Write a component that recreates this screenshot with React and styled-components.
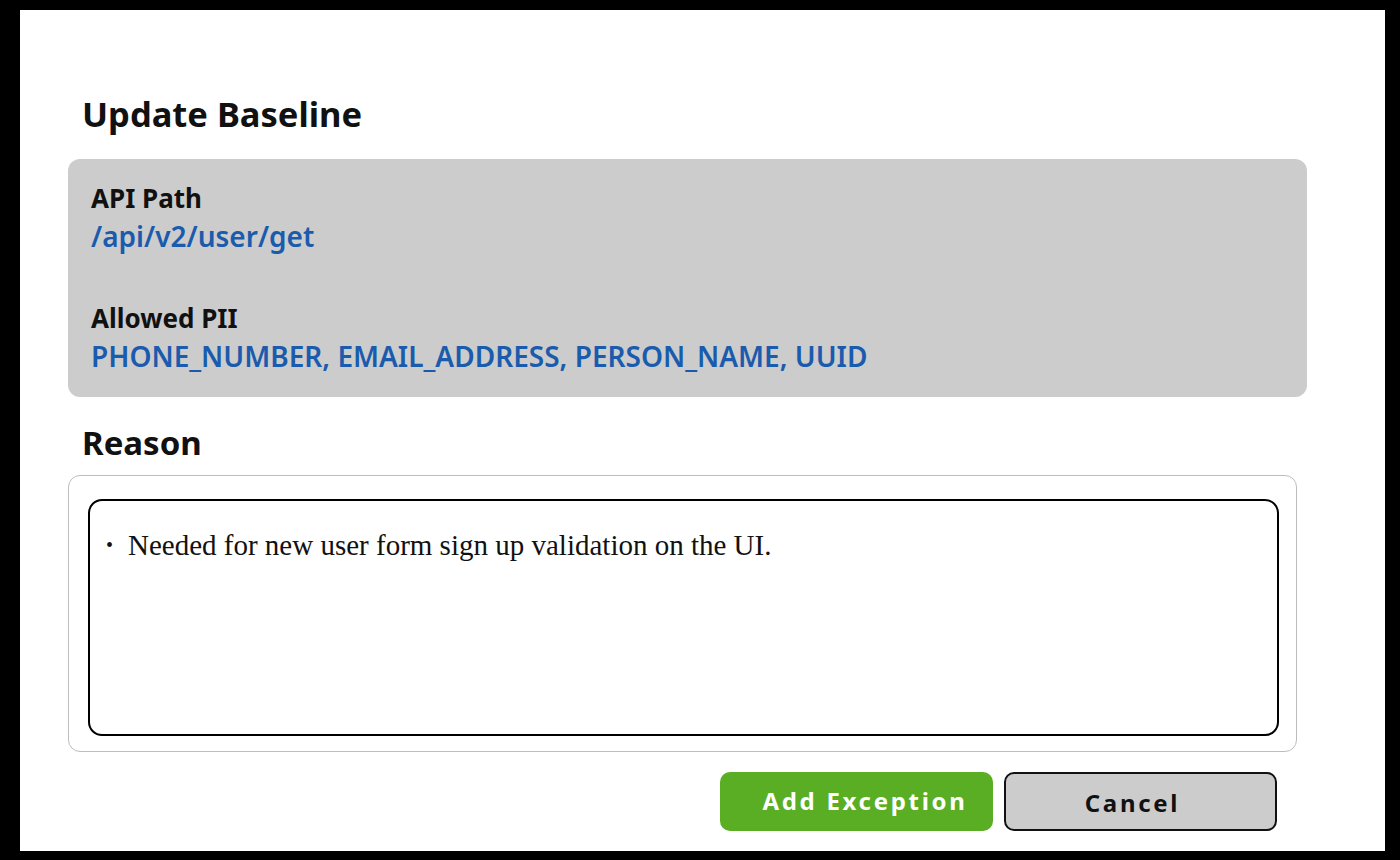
import React from "react";
import styled, { createGlobalStyle } from "styled-components";

const Global = createGlobalStyle`
  html, body { margin: 0; padding: 0; background: #000; }
  body { font-family: "Noto Sans", "Liberation Sans", sans-serif; }
  * { box-sizing: border-box; }
`;

const Panel = styled.div`
  margin: 10px 15px 9px 20px;
  height: 841px;
  background: #fff;
  padding: 83px 0 0 48px;
  display: flex;
  flex-direction: column;
`;

const Heading = styled.h1`
  margin: 0 0 0 14px;
  font-size: ${(p) => p.$size || 34.5}px;
  line-height: 42px;
  font-weight: 700;
  color: #111;
`;

const InfoBox = styled.section`
  margin-top: 24px;
  width: 1239px;
  background: #cccccc;
  border-radius: 12px;
  padding: 21px 23px;
  display: flex;
  flex-direction: column;
  gap: 44px;
`;

const Field = styled.div`
  display: flex;
  flex-direction: column;
`;

const Label = styled.div`
  font-size: 26px;
  line-height: 36px;
  font-weight: 700;
  color: #111;
`;

const Value = styled.div`
  font-size: 28px;
  line-height: 40px;
  font-weight: 600;
  color: #1a5bad;
`;

const SubHeading = styled(Heading)`
  margin-top: 25px;
`;

const EditorFrame = styled.div`
  margin-top: 11px;
  width: 1229px;
  height: 277px;
  border: 1px solid #bdbdbd;
  border-radius: 12px;
  padding: 23px 17px 15px 19px;
`;

const Editor = styled.div`
  height: 100%;
  border: 2px solid #000;
  border-radius: 14px;
  padding: 26px 16px 18px;
  font-family: "Liberation Serif", "Times New Roman", serif;
  font-size: 29px;
  line-height: 36px;
  color: #111;
`;

const Bullets = styled.ul`
  margin: 0;
  padding: 0 0 0 22px;
  list-style: none;
`;

const Bullet = styled.li`
  position: relative;
  &::before {
    content: "•";
    position: absolute;
    left: -22px;
    top: 0;
    font-size: 20px;
  }
`;

const Actions = styled.div`
  margin-top: 20px;
  width: 1209px;
  display: flex;
  justify-content: flex-end;
  gap: 11px;
`;

const Button = styled.button`
  width: 273px;
  height: 59px;
  border-radius: 10px;
  font-family: "Noto Sans", "Liberation Sans", sans-serif;
  font-size: 24px;
  font-weight: 700;
  letter-spacing: 2.7px;
  cursor: pointer;
  background: ${(p) => (p.$primary ? "#5aae24" : "#cccccc")};
  color: ${(p) => (p.$primary ? "#fff" : "#111")};
  border: ${(p) => (p.$primary ? "none" : "2px solid #111")};
  padding: ${(p) => (p.$primary ? "0 0 2px 17px" : "2px 16px 0 0")};
`;

export default function App() {
  return (
    <>
      <Global />
      <Panel>
        <Heading>Update Baseline</Heading>
        <InfoBox>
          <Field>
            <Label>API Path</Label>
            <Value>/api/v2/user/get</Value>
          </Field>
          <Field>
            <Label>Allowed PII</Label>
            <Value>PHONE_NUMBER, EMAIL_ADDRESS, PERSON_NAME, UUID</Value>
          </Field>
        </InfoBox>
        <SubHeading $size={33}>Reason</SubHeading>
        <EditorFrame>
          <Editor>
            <Bullets>
              <Bullet>Needed for new user form sign up validation on the UI.</Bullet>
            </Bullets>
          </Editor>
        </EditorFrame>
        <Actions>
          <Button $primary>Add Exception</Button>
          <Button>Cancel</Button>
        </Actions>
      </Panel>
    </>
  );
}
